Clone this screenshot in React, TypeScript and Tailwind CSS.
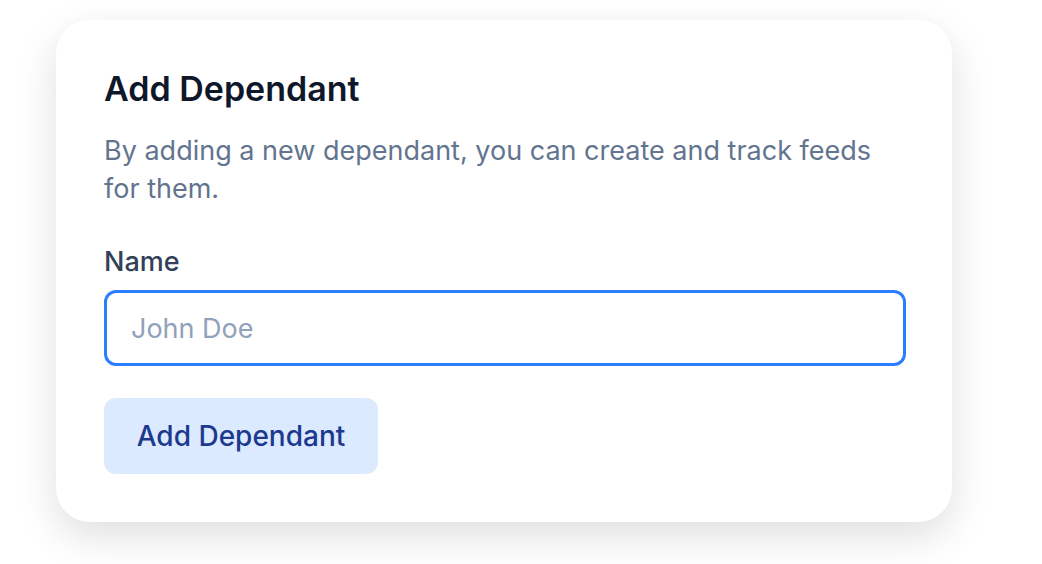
export default function App() {
  return (
    <div className="min-h-screen bg-white pt-[20px] font-['Inter','Liberation_Sans',sans-serif]">
      <div className="ml-[56px] w-[896px] rounded-[34px] bg-white p-[48px] shadow-[0_14px_40px_rgba(0,0,0,0.13)]">
        <h2 className="text-[34px] leading-[42px] font-semibold text-slate-900">Add Dependant</h2>
        <p className="mt-[22px] text-[27px] leading-[38px] text-slate-500">
          By adding a new dependant, you can create and track feeds for them.
        </p>
        <form className="mt-[36px] flex flex-col" onSubmit={(e) => e.preventDefault()}>
          <label htmlFor="name" className="text-[27px] leading-[36px] font-medium text-slate-700">
            Name
          </label>
          <input
            id="name"
            type="text"
            placeholder="John Doe"
            className="mt-[10px] h-[76px] w-[802px] rounded-[12px] border-[3px] border-blue-500 px-[24px] text-[27px] text-slate-900 placeholder:text-slate-400 outline-none"
          />
          <button
            type="submit"
            className="mt-[32px] h-[76px] w-[274px] rounded-[12px] bg-blue-100 text-[28px] font-medium text-blue-900"
          >
            Add Dependant
          </button>
        </form>
      </div>
    </div>
  );
}
